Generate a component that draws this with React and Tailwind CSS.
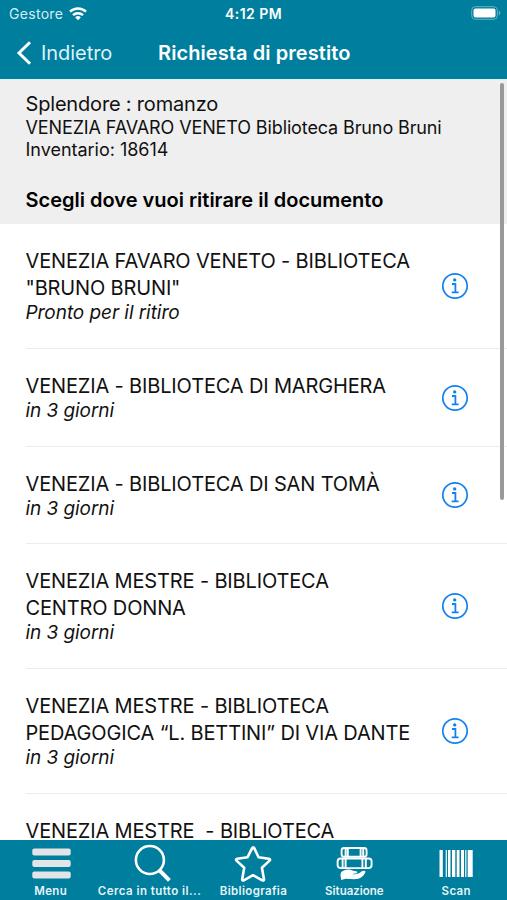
const LIBRARIES = [
  { id: 1, lines: ["VENEZIA FAVARO VENETO - BIBLIOTECA", '"BRUNO BRUNI"'], status: "Pronto per il ritiro" },
  { id: 2, lines: ["VENEZIA - BIBLIOTECA DI MARGHERA"], status: "in 3 giorni" },
  { id: 3, lines: ["VENEZIA - BIBLIOTECA DI SAN TOMÀ"], status: "in 3 giorni" },
  { id: 4, lines: ["VENEZIA MESTRE - BIBLIOTECA", "CENTRO DONNA"], status: "in 3 giorni" },
  {
    id: 5,
    lines: ["VENEZIA MESTRE - BIBLIOTECA", "PEDAGOGICA “L. BETTINI” DI VIA DANTE"],
    status: "in 3 giorni",
  },
  { id: 6, lines: ["VENEZIA MESTRE  - BIBLIOTECA"], status: null },
];

function WifiIcon() {
  return (
    <svg viewBox="0 0 18 14" className="h-[14px] w-[18px] text-white" fill="none" stroke="currentColor" strokeWidth="2.5" aria-hidden="true">
      <path d="M1 4.7a11.6 11.6 0 0 1 16 0" />
      <path d="M4 8.2a7.2 7.2 0 0 1 10 0" />
      <path d="M9 13.3l-2.8-2.9a4 4 0 0 1 5.6 0z" fill="currentColor" stroke="none" />
    </svg>
  );
}

function BatteryIcon() {
  return (
    <svg viewBox="0 0 30 14" className="h-[14px] w-[30px]" aria-hidden="true">
      <rect x="0.7" y="0.7" width="25.6" height="12.6" rx="3.6" fill="none" stroke="#66b2c5" strokeWidth="1" />
      <rect x="2.5" y="2.5" width="22" height="9" rx="2" fill="#fff" />
      <path d="M27.8 4.6c2 .7 2 4.1 0 4.8z" fill="#66b2c5" />
    </svg>
  );
}

function InfoIcon() {
  return (
    <svg viewBox="0 0 28 28" className="h-7 w-7 text-[#1481f0]" aria-hidden="true">
      <circle cx="14" cy="14" r="12.2" fill="none" stroke="currentColor" strokeWidth="1.7" />
      <circle cx="13.7" cy="7.9" r="1.7" fill="currentColor" />
      <path d="M11 12h3.4v8.3M10.7 20.4h6.9" fill="none" stroke="currentColor" strokeWidth="1.8" />
    </svg>
  );
}

function MenuIcon() {
  return (
    <svg viewBox="0 0 40 42" className="h-[42px] w-10" fill="#e2e4e6" aria-hidden="true">
      <rect x="1.3" y="6.5" width="38.4" height="7" rx="2" />
      <rect x="1.3" y="18" width="38.4" height="7" rx="2" />
      <rect x="1.3" y="29.5" width="38.4" height="7" rx="2" />
    </svg>
  );
}

function SearchIcon() {
  return (
    <svg viewBox="0 0 40 42" className="h-[42px] w-10" fill="none" stroke="currentColor" aria-hidden="true">
      <circle cx="17.9" cy="18" r="14" strokeWidth="2.6" />
      <path d="M27 27.8l10.4 10.6" strokeWidth="4" />
    </svg>
  );
}

function StarIcon() {
  return (
    <svg viewBox="0 0 40 42" className="h-[42px] w-10" fill="none" stroke="currentColor" strokeWidth="2.6" strokeLinejoin="round" aria-hidden="true">
      <path d="M20.2 5.2c.6 0 .8.5 1.1 1.1l4.3 8.9 10.2 1.5c1.4.2 1.6 1.1.8 1.9l-7.7 7.1 2.1 11.5c.1 1.2-.7 1.6-1.7 1.1l-9.3-5.1-9.2 5.1c-1 .5-1.8 0-1.6-1.1l2-11.5-7.7-7.1c-.8-.8-.5-1.7.8-1.9l10.3-1.5 4.4-8.9c.3-.6.7-1.1 1.2-1.1z" />
    </svg>
  );
}

function LoanIcon() {
  return (
    <svg viewBox="0 0 40 42" className="h-[42px] w-10" fill="none" stroke="currentColor" strokeWidth="1.9" aria-hidden="true">
      <rect x="6.6" y="6" width="25" height="8.8" rx="2.5" />
      <path d="M10.6 6v8.8M12.8 6v8.8M25.6 6v8.8M28.2 6v8.8" />
      <rect x="2.6" y="16.5" width="34" height="9.6" rx="3" />
      <path d="M7.6 16.5v9.6M10.6 16.5v9.6M27.4 16.5v9.6M30.8 16.5v9.6" />
      <path
        d="M6.2 29.9c2.6-2 6.4-2.9 9.4-2.1 2 .7 3.2 1.6 5.5 1.5 1.4 0 1.7 1.4.6 1.9l-4.3.9c3.6.6 6.7-.2 8.7-2.3 1.5-1.2 3.6-1.4 4.5-.2-1.2 4-4.6 7.1-9 7.5-4.1.4-7.2-.5-10.9-.3l-4.5 1.1-.8-5.2z"
        fill="currentColor"
        stroke="none"
      />
    </svg>
  );
}

function BarcodeIcon() {
  return (
    <svg viewBox="0 0 40 42" className="h-[42px] w-10" fill="currentColor" aria-hidden="true">
      <path d="M3.5 8h3.3v27h-3.3zM9.7 8h1.2v27h-1.2zM12 8h2.5v27h-2.5zM16 8h3.3v27h-3.3zM20.7 8h2.8v27h-2.8zM25 8h3v27h-3zM29.2 8h1.2v27h-1.2zM31.7 8h5v27h-5z" />
    </svg>
  );
}

const TABS = [
  { label: "Menu", Icon: MenuIcon, labelClass: "" },
  { label: "Cerca in tutto il...", Icon: SearchIcon, labelClass: "pr-[5px] tracking-[0.45px]" },
  { label: "Bibliografia", Icon: StarIcon, labelClass: "" },
  { label: "Situazione", Icon: LoanIcon, labelClass: "pr-px" },
  { label: "Scan", Icon: BarcodeIcon, labelClass: "" },
];

function LibraryRow({ library }) {
  return (
    <li className="ml-[25.5px] flex shrink-0 items-center justify-between border-b border-[#ececec] pt-[24px] pr-[38px] pb-[23.7px] last:h-[46px] last:items-start last:border-0 last:pb-0">
      <div>
        {library.lines.map((line) => (
          <p key={line} className="text-[20px] leading-[27px] tracking-[-0.15px] whitespace-pre">
            {line}
          </p>
        ))}
        {library.status && <p className="text-[19px] leading-[22px] tracking-[-0.06px] italic">{library.status}</p>}
      </div>
      {library.status && (
        <button type="button" aria-label="Informazioni">
          <InfoIcon />
        </button>
      )}
    </li>
  );
}

export default function App() {
  return (
    <div className="flex h-[900px] w-[507px] flex-col overflow-hidden bg-white font-['Inter',sans-serif] text-[#111]">
      <header className="h-[79px] shrink-0 bg-[#007e9e] text-white">
        <div className="grid h-7 grid-cols-3 items-center pr-[6px] pb-px pl-[9px]">
          <div className="flex items-center gap-[6px] text-[#d5edf4]">
            <span className="text-[14px] tracking-[0.3px]">Gestore</span>
            <WifiIcon />
          </div>
          <span className="pr-[3px] text-center text-[14px] font-semibold tracking-[0.45px] whitespace-nowrap">4:12 PM</span>
          <div className="flex justify-end pb-px">
            <BatteryIcon />
          </div>
        </div>
        <div className="flex h-[49px] items-center pl-[16px]">
          <button type="button" className="flex w-[142px] items-center gap-[9px] text-[20px] tracking-[-0.05px] text-[#def2f7]">
            <svg viewBox="0 0 16 24" className="h-6 w-4" fill="none" stroke="#fff" strokeWidth="3" aria-hidden="true">
              <path d="M14 1.2L3 12l11 10.8" />
            </svg>
            Indietro
          </button>
          <h1 className="text-[20px] font-semibold tracking-[0.08px]">Richiesta di prestito</h1>
        </div>
      </header>

      <main className="relative flex min-h-0 flex-1 flex-col">
        <section className="h-[145px] shrink-0 border-t border-[#d9f2f8] bg-[#efefef] pt-[11px] pl-[25.5px]">
          <p className="text-[20px] leading-[26px] tracking-[-0.18px]">Splendore : romanzo</p>
          <p className="text-[18px] leading-[22px] tracking-[-0.12px]">VENEZIA FAVARO VENETO Biblioteca Bruno Bruni</p>
          <p className="text-[18px] leading-[22px] tracking-[-0.02px]">Inventario: 18614</p>
          <h2 className="mt-[26px] text-[20px] leading-[26px] font-semibold text-black">
            Scegli dove vuoi ritirare il documento
          </h2>
        </section>
        <ul className="flex min-h-0 flex-1 flex-col pt-[0.4px]">
          {LIBRARIES.map((library) => (
            <LibraryRow key={library.id} library={library} />
          ))}
        </ul>
        <div className="absolute top-[4px] right-[3.5px] h-[417px] w-[4px] rounded-full bg-[#999]" />
      </main>

      <nav className="relative flex h-[60px] shrink-0 bg-[#007e9e] text-white">
        {TABS.map(({ label, Icon, labelClass }) => (
          <button key={label} type="button" className="flex w-1/5 flex-col items-center pt-[2px]">
            <Icon />
            <span className={`text-[11.5px] leading-[14px] font-semibold whitespace-nowrap text-[#e4f4f8] ${labelClass || "tracking-[0.35px]"}`}>
              {label}
            </span>
          </button>
        ))}
      </nav>
    </div>
  );
}
